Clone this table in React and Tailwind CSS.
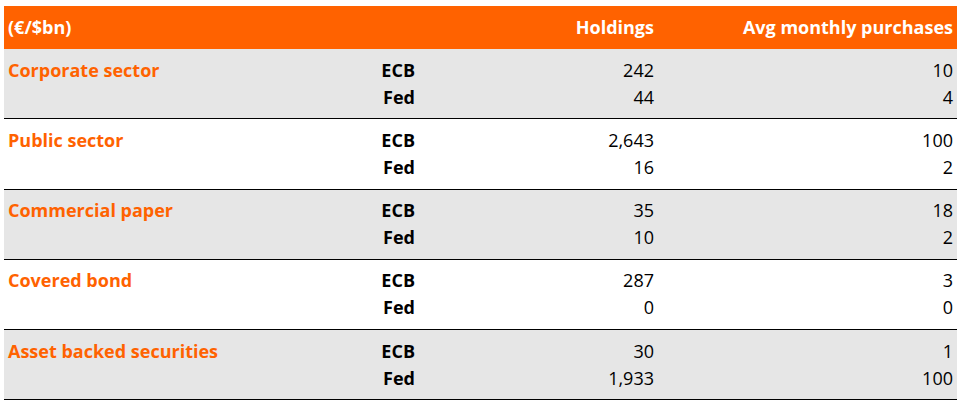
const rows = [
  { name: 'Corporate sector', ecb: ['242', '10'], fed: ['44', '4'], shade: true },
  { name: 'Public sector', ecb: ['2,643', '100'], fed: ['16', '2'], shade: false },
  { name: 'Commercial paper', ecb: ['35', '18'], fed: ['10', '2'], shade: true },
  { name: 'Covered bond', ecb: ['287', '3'], fed: ['0', '0'], shade: false },
  { name: 'Asset backed securities', ecb: ['30', '1'], fed: ['1,933', '100'], shade: true },
]

export default function App() {
  return (
    <div
      className="w-[960px] h-[407px] bg-white pt-[6px] pl-[4px] pr-[3px]"
      style={{ fontFamily: '"Open Sans", "Noto Sans", sans-serif' }}
    >
      {/* header */}
      <div className="flex items-center h-[43px] bg-[#ff6200] text-white font-bold text-[18px]">
        <div className="w-[300px] pl-[4px]">(€/$bn)</div>
        <div className="w-[111px]"></div>
        <div className="w-[239px] text-right">Holdings</div>
        <div className="flex-1 text-right pr-[4px]">Avg monthly purchases</div>
      </div>

      {rows.map(r => (
        <div
          key={r.name}
          className={`flex pt-[7.5px] pb-[7.75px] border-b-[1.5px] border-black text-[18px] leading-[27px] ${r.shade ? 'bg-[#e6e6e6]' : 'bg-white'}`}
        >
          <div className="w-[300px] pl-[4px] font-bold text-[#ff6200]">{r.name}</div>
          <div className="w-[111px] text-right font-bold text-black">
            <div>ECB</div>
            <div>Fed</div>
          </div>
          <div className="w-[239px] text-right text-black">
            <div>{r.ecb[0]}</div>
            <div>{r.fed[0]}</div>
          </div>
          <div className="flex-1 text-right pr-[4px] text-black">
            <div>{r.ecb[1]}</div>
            <div>{r.fed[1]}</div>
          </div>
        </div>
      ))}
    </div>
  )
}
